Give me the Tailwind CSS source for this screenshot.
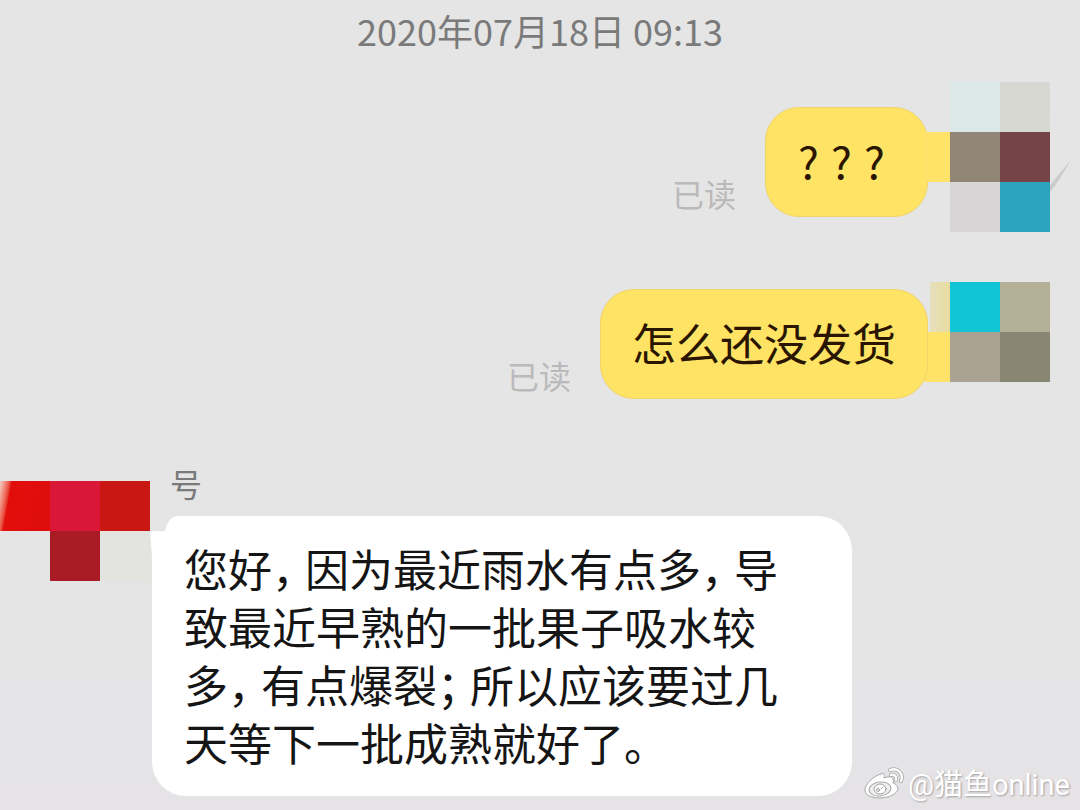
<!DOCTYPE html>
<html lang="zh-CN">
<head>
<meta charset="utf-8">
<meta name="viewport" content="width=device-width, initial-scale=1">
<title>聊天记录</title>
<script src="https://cdn.jsdelivr.net/npm/@tailwindcss/browser@4"></script>
</head>
<body class="min-h-screen bg-[#e5e5e5] font-['Noto_Sans_CJK_SC',sans-serif] text-[#151515]">
<main class="relative min-h-screen overflow-hidden bg-linear-to-b from-[#e5e5e5] from-60% to-[#e5e3e6]">
  <time datetime="2020-07-18T09:13" class="block pt-px pb-[23px] text-center text-4xl leading-[58px] text-[#7a7a7a]">2020年07月18日 09:13</time>

  <section class="flex items-start justify-end pr-[30px]" aria-label="已发送消息">
    <span class="mt-[87px] mr-[29px] text-[32px] leading-[48px] text-[#bababa]">已读</span>
    <p class="mt-[25px] flex rounded-[34px] border border-[#f0d56c] bg-[#ffe364] pt-[23px] pb-[27px] pr-[30px] pl-8 text-[44px] leading-[58px] text-[#2a1600]">
      <span class="w-[33px]">?</span><span class="w-[33px]">?</span><span class="w-[33px]">?</span>
    </p>
    <span class="mt-[50px] -ml-1 h-[50px] w-[26px] bg-[#ffe368]"></span>
    <div class="relative grid grid-cols-[50px_50px] grid-rows-[50px_50px_50px]">
      <i class="bg-[#dce8e8]"></i><i class="bg-[#d6d8d1]"></i>
      <i class="bg-[#918575]"></i><i class="bg-[#754448]"></i>
      <i class="bg-[#d8d5d6]"></i><i class="bg-[#2ca4c0]"></i>
      <svg class="absolute top-[76px] left-[100px] h-10 w-6" viewBox="0 0 24 40" aria-hidden="true"><path d="M0 34Q9 23 21 2Q10 15 0 27Z" fill="#cbcbcd"/></svg>
    </div>
  </section>

  <section class="mt-[50px] flex items-start justify-end pr-[30px]" aria-label="已发送消息">
    <span class="mt-[69px] mr-[29px] text-[32px] leading-[48px] text-[#bababa]">已读</span>
    <p class="z-1 mt-[7px] rounded-[34px] border border-[#f0d56c] bg-[#ffe364] px-[31px] pt-[23px] pb-[27px] text-[44px] leading-[58px] text-[#2a1600]">怎么还没发货</p>
    <span class="flex w-[22px] flex-col pt-[50px]"><i class="-ml-1 h-[50px] w-[26px] bg-[#ffe368]"></i></span>
    <div class="relative grid grid-cols-[50px_50px] grid-rows-[50px_50px]">
      <i class="bg-[#11c5d6]"></i><i class="bg-[#b3b097]"></i>
      <i class="bg-[#aaa293]"></i><i class="bg-[#898674]"></i>
      <i class="absolute top-0 right-full h-[50px] w-5 bg-linear-to-r from-[#e6dfbd] to-[#e9dc9f]"></i>
    </div>
  </section>

  <section class="mt-16 flex items-start" aria-label="收到的消息">
    <div class="mt-[18px] grid grid-cols-[50px_50px_50px] grid-rows-[50px_50px]">
      <i class="bg-linear-100 from-[#f0cdc8] via-[#e20e0c] via-20% to-[#dd0e0c]"></i><i class="bg-[#db1738]"></i><i class="bg-[#c91713]"></i>
      <i></i><i class="bg-[#a91c25]"></i><i class="bg-[#e3e4e0]"></i>
    </div>
    <div class="ml-[2px]">
      <h2 class="h-[53px] pl-[18px] text-[32px] leading-[40px] text-[#7a7a7a]">号</h2>
      <div class="relative rounded-[34px] rounded-tl-none bg-white pt-[23px] pb-[25px] pr-[74px] pl-8 text-[44px] leading-[58px]">
        <svg class="absolute top-0 -left-[2px] h-10 w-7" viewBox="0 0 28 40" aria-hidden="true"><path d="M0 0H28Q18 1 15 15H0Z" fill="#e5e5e5"/><path d="M0 15H4V40H2Z" fill="#fff"/></svg>
        <p>您好<span class="inline-block w-[33px] [font-feature-settings:'halt']">，</span>因为最近雨水有点多<span class="inline-block w-[33px] [font-feature-settings:'halt']">，</span>导<br>致最近早熟的一批果子吸水较<br>多<span class="inline-block w-[33px] [font-feature-settings:'halt']">，</span>有点爆裂<span class="inline-block w-[33px] [font-feature-settings:'halt']">；</span>所以应该要过几<br>天等下一批成熟就好了。</p>
      </div>
    </div>
  </section>

  <footer class="absolute right-[10px] bottom-[5px] flex items-center gap-1 text-white">
    <svg class="h-9 w-10" viewBox="0 0 40 36" fill="none" stroke-linecap="round" stroke-linejoin="round" aria-hidden="true">
      <path d="M17 7C9 9 0 18 1 24C3 34 31 33 34 22C34 19 32 17 29 16C31 9 25 9 20 11C21 7 20 5 17 7Z" fill="#fff" stroke="#aaa8aa"/>
      <ellipse cx="16" cy="22" rx="11" ry="7" fill="#f0eff0" stroke="#aaa8aa" transform="rotate(-7 16 22)"/>
      <ellipse cx="16" cy="22" rx="6" ry="5" fill="#fff" stroke="#a19fa1"/>
      <circle cx="14" cy="23" r="1.5" stroke="#a19fa1"/><path d="M17 22L19 20" stroke="#a19fa1"/>
      <path d="M26 3C34 0 40 7 37 14M27 8C31 7 33 10 32 13" stroke="#aaa8aa" stroke-width="4"/>
      <path d="M26 3C34 0 40 7 37 14M27 8C31 7 33 10 32 13" stroke="#fff" stroke-width="2.4"/>
    </svg>
    <span class="font-[Roboto,'Noto_Sans_CJK_SC',sans-serif] text-[29px] leading-10 text-shadow-[1px_1px_2px_#a09ea0]">@猫鱼online</span>
  </footer>
</main>
</body>
</html>
